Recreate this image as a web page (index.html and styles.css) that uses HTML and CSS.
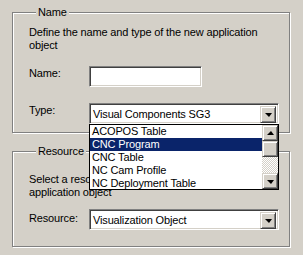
FILE: index.html
```html
<!DOCTYPE html>
<html>
<head>
<meta charset="utf-8">
<link rel="stylesheet" href="styles.css">
</head>
<body>
<div class="dialog">
  <fieldset class="group group-name">
    <legend>Name</legend>
    <p class="desc">Define the name and type of the new application object</p>
    <div class="row row-name">
      <span class="label">Name:</span>
      <div class="edit"></div>
    </div>
    <div class="row row-type">
      <span class="label">Type:</span>
      <div class="combo">
        <span class="value">Visual Components SG3</span>
        <span class="btn"><span class="arrow down"></span></span>
        <div class="droplist">
          <ul class="items">
            <li>ACOPOS Table</li>
            <li class="sel">CNC Program</li>
            <li>CNC Table</li>
            <li>NC Cam Profile</li>
            <li>NC Deployment Table</li>
          </ul>
          <div class="vscroll">
            <span class="btn"><span class="arrow up"></span></span>
            <span class="thumb"></span>
            <span class="track"></span>
            <span class="btn"><span class="arrow down"></span></span>
          </div>
        </div>
      </div>
    </div>
  </fieldset>
  <fieldset class="group group-res">
    <legend>Resource</legend>
    <p class="desc">Select a resource type for the new<br>application object</p>
    <div class="row row-res">
      <span class="label">Resource:</span>
      <div class="combo">
        <span class="value">Visualization Object</span>
        <span class="btn"><span class="arrow down"></span></span>
      </div>
    </div>
  </fieldset>
</div>
</body>
</html>
```

FILE: styles.css
```css
html, body {
  margin: 0;
  padding: 0;
  background: #d4d0c8;
}
body {
  font-family: "Liberation Sans", Arial, sans-serif;
  font-size: 11px;
  line-height: 13px;
  letter-spacing: -0.15px;
  color: #000;
  width: 303px;
  height: 255px;
  overflow: hidden;
}
.dialog {
  padding: 6px 0 0 12px;
  display: flex;
  flex-direction: column;
  gap: 12px;
}
.group {
  margin: 0;
  box-sizing: border-box;
  width: 278px;
  min-width: 0;
  border: 1px solid #808080;
  box-shadow: 1px 1px 0 #fff, inset 1px 1px 0 #fff;
  padding: 0 0 0 16px;
}
.group legend {
  margin-left: 7px;
  padding: 0 2px 0 2px;
  background: #d4d0c8;
  position: relative;
}
.group-name {
  height: 127px;
}
.group-res {
  height: 102px;
}
.desc {
  margin: 7px 0 0 0;
  width: 250px;
}
.group-res .desc {
  margin-top: 15px;
}
.row {
  display: flex;
  align-items: flex-start;
}
.row .label {
  width: 60px;
}
.row-name {
  margin-top: 14px;
}
.row-name .label { padding-top: 1px; }
.row-type {
  margin-top: 16px;
}
.row-type .label { padding-top: 1px; }
.row-res {
  margin-top: 10px;
}
.row-res .label { padding-top: 3px; }

.edit, .combo {
  box-sizing: border-box;
  height: 21px;
  background: #fff;
  border-style: solid;
  border-width: 1px;
  border-color: #808080 #fff #fff #808080;
  box-shadow: inset 1px 1px 0 #404040, inset -1px -1px 0 #d4d0c8;
}
.edit {
  width: 113px;
}
.combo {
  width: 190px;
  position: relative;
  display: flex;
  padding: 2px 2px 2px 3px;
}
.combo .value {
  flex: 1;
  line-height: 17px;
}
.btn {
  box-sizing: border-box;
  width: 16px;
  height: 17px;
  background: #d4d0c8;
  border-style: solid;
  border-width: 1px;
  border-color: #d4d0c8 #404040 #404040 #d4d0c8;
  box-shadow: inset 1px 1px 0 #fff, inset -1px -1px 0 #808080;
  display: flex;
  align-items: center;
  justify-content: center;
}
.arrow {
  width: 0;
  height: 0;
  border-left: 4px solid transparent;
  border-right: 3px solid transparent;
}
.arrow.down {
  border-top: 4px solid #000;
  margin-top: 1px;
}
.arrow.up {
  border-bottom: 4px solid #000;
}
.droplist {
  position: absolute;
  left: -1px;
  top: 20px;
  width: 190px;
  height: 66px;
  box-sizing: border-box;
  border: 1px solid #000;
  background: #fff;
  display: flex;
  z-index: 5;
}
.items {
  list-style: none;
  margin: 0;
  padding: 0;
  flex: 1;
}
.items li {
  height: 13px;
  padding-left: 2px;
  white-space: nowrap;
}
.items li.sel {
  background: #0a246a;
  color: #fff;
}
.vscroll {
  width: 16px;
  display: flex;
  flex-direction: column;
}
.vscroll .btn {
  height: 16px;
}
.vscroll .thumb {
  box-sizing: border-box;
  height: 16px;
  background: #d4d0c8;
  border-style: solid;
  border-width: 1px;
  border-color: #d4d0c8 #404040 #404040 #d4d0c8;
  box-shadow: inset 1px 1px 0 #fff, inset -1px -1px 0 #808080;
}
.vscroll .track {
  height: 16px;
  background: repeating-conic-gradient(#fff 0 25%, #d4d0c8 0 50%) 0 0 / 2px 2px;
}
```
